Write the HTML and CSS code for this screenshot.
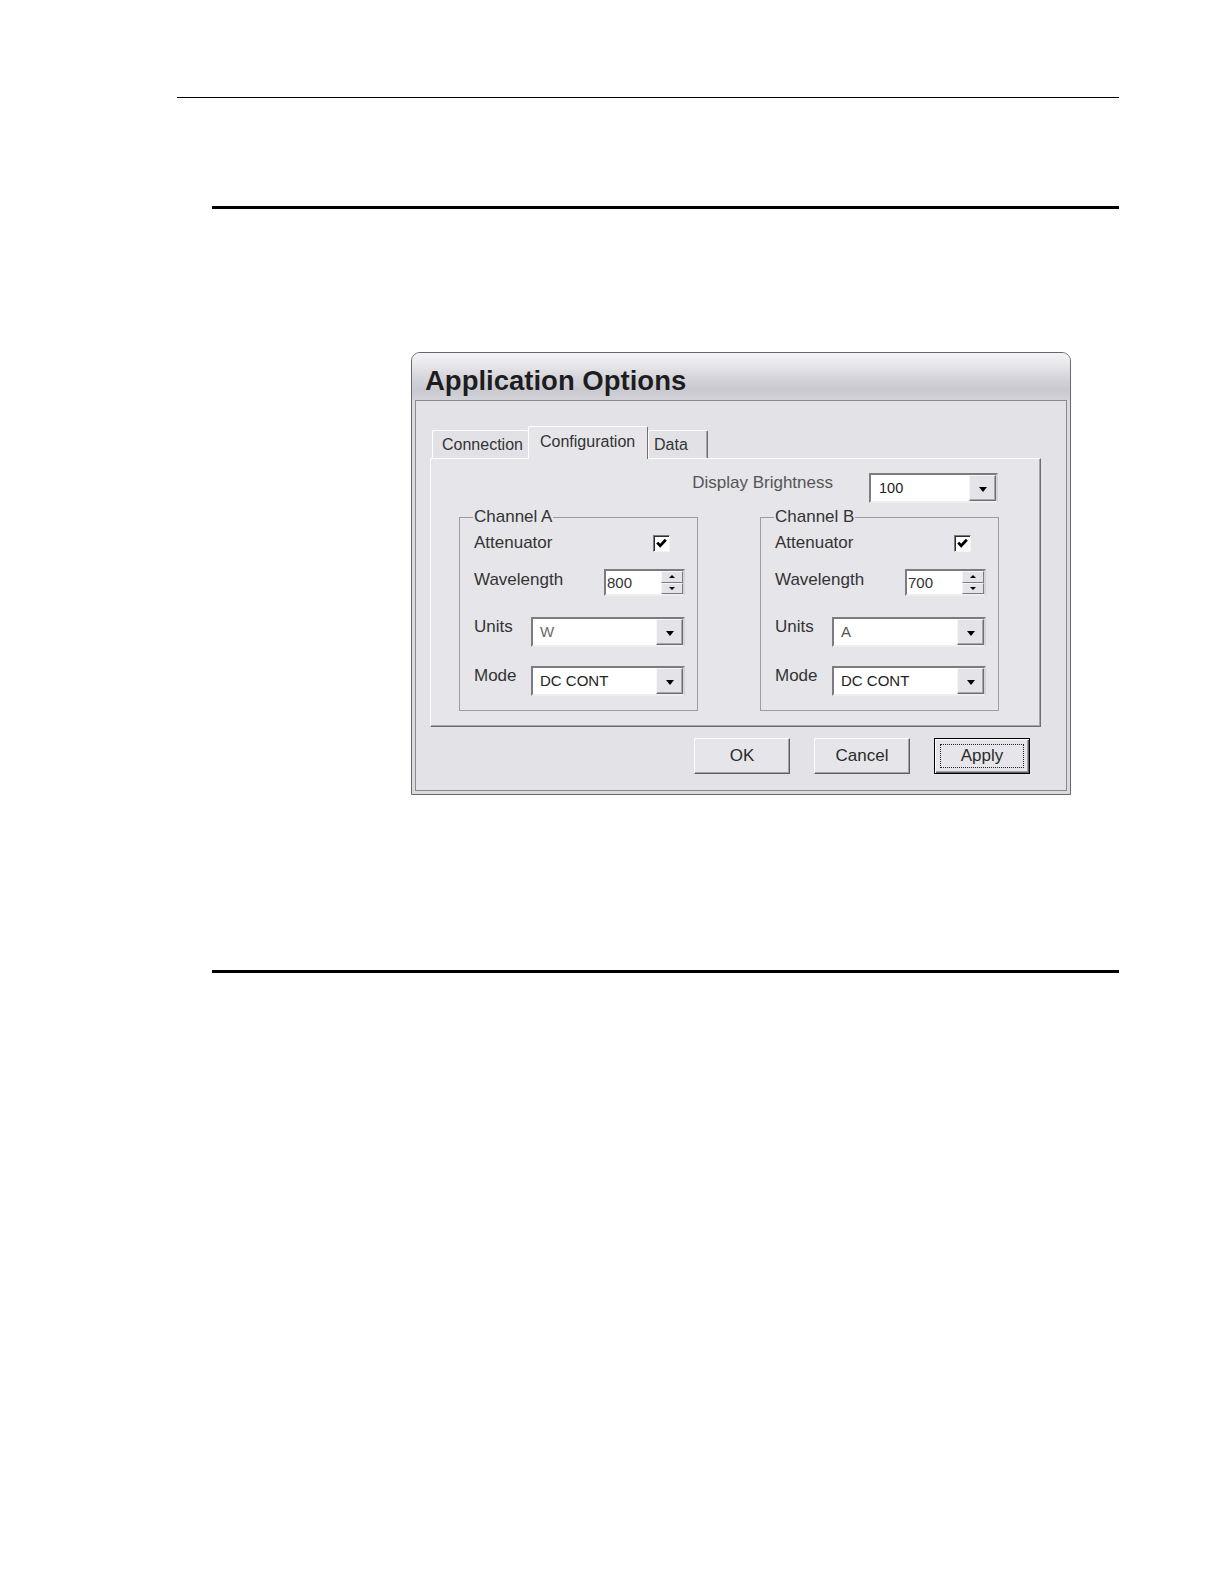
FILE: index.html
```html
<!DOCTYPE html>
<html lang="en">
<head>
<meta charset="utf-8">
<title>Application Options</title>
<link rel="stylesheet" href="styles.css">
</head>
<body>
<div class="page">
  <div class="rule-thin"></div>
  <div class="rule-thick rule-top"></div>

  <div class="dialog">
    <div class="titlebar"><span class="title">Application Options</span></div>
    <div class="client">
      <div class="tabs">
        <div class="tab tab-connection">Connection</div>
        <div class="tab tab-active">Configuration</div>
        <div class="tab tab-data">Data</div>
      </div>
      <div class="panel">
        <div class="brightness-row">
          <span class="label label-dim">Display Brightness</span>
          <div class="combo combo-brightness">
            <span class="combo-text">100</span>
            <span class="drop-btn"><span class="arrow-down"></span></span>
          </div>
        </div>
        <div class="groups">
          <fieldset class="group">
            <legend>Channel A</legend>
            <div class="row row-check">
              <span class="label">Attenuator</span>
              <span class="checkbox"><svg viewBox="0 0 15 15" width="15" height="15"><path d="M3.2 6.6 L6.2 9.8 L11.8 3.8" fill="none" stroke="#000" stroke-width="2.8"/></svg></span>
            </div>
            <div class="row row-spin">
              <span class="label">Wavelength</span>
              <div class="spin">
                <span class="spin-text">800</span>
                <span class="spin-btns">
                  <span class="spin-btn"><span class="arrow-up-sm"></span></span>
                  <span class="spin-btn"><span class="arrow-down-sm"></span></span>
                </span>
              </div>
            </div>
            <div class="row row-units">
              <span class="label">Units</span>
              <div class="combo combo-field">
                <span class="combo-text text-dim">W</span>
                <span class="drop-btn"><span class="arrow-down"></span></span>
              </div>
            </div>
            <div class="row row-mode">
              <span class="label">Mode</span>
              <div class="combo combo-field">
                <span class="combo-text">DC CONT</span>
                <span class="drop-btn"><span class="arrow-down"></span></span>
              </div>
            </div>
          </fieldset>

          <fieldset class="group">
            <legend>Channel B</legend>
            <div class="row row-check">
              <span class="label">Attenuator</span>
              <span class="checkbox"><svg viewBox="0 0 15 15" width="15" height="15"><path d="M3.2 6.6 L6.2 9.8 L11.8 3.8" fill="none" stroke="#000" stroke-width="2.8"/></svg></span>
            </div>
            <div class="row row-spin">
              <span class="label">Wavelength</span>
              <div class="spin">
                <span class="spin-text">700</span>
                <span class="spin-btns">
                  <span class="spin-btn"><span class="arrow-up-sm"></span></span>
                  <span class="spin-btn"><span class="arrow-down-sm"></span></span>
                </span>
              </div>
            </div>
            <div class="row row-units">
              <span class="label">Units</span>
              <div class="combo combo-field">
                <span class="combo-text text-dim2">A</span>
                <span class="drop-btn"><span class="arrow-down"></span></span>
              </div>
            </div>
            <div class="row row-mode">
              <span class="label">Mode</span>
              <div class="combo combo-field">
                <span class="combo-text">DC CONT</span>
                <span class="drop-btn"><span class="arrow-down"></span></span>
              </div>
            </div>
          </fieldset>
        </div>
      </div>
      <div class="buttons">
        <button class="btn" type="button"><span class="btn-label">OK</span></button>
        <button class="btn" type="button"><span class="btn-label">Cancel</span></button>
        <button class="btn btn-default" type="button"><span class="btn-label">Apply</span></button>
      </div>
    </div>
  </div>

  <div class="rule-thick rule-bottom"></div>
</div>
</body>
</html>
```

FILE: styles.css
```css
html, body {
  margin: 0;
  padding: 0;
  background: #ffffff;
}

body {
  font-family: "Liberation Sans", Arial, sans-serif;
  color: #333;
}

.page {
  padding-top: 97px;
}

.rule-thin {
  margin-left: 177px;
  width: 942px;
  height: 1px;
  background: #000;
}

.rule-thick {
  margin-left: 212px;
  width: 907px;
  height: 3px;
  background: #000;
}

.rule-top {
  margin-top: 108px;
}

.rule-bottom {
  margin-top: 175px;
}

/* ---------- dialog ---------- */

.dialog {
  margin-top: 143px;
  margin-left: 411px;
  width: 660px;
  box-sizing: border-box;
  border: 1px solid #67676c;
  border-radius: 9px 9px 0 0;
  background: #dadadf;
  padding: 0 3px 3px;
}

.titlebar {
  height: 47px;
  box-sizing: border-box;
  margin: 0 -3px;
  padding: 14px 0 0 13px;
  border-radius: 8px 8px 0 0;
  background: linear-gradient(to bottom,
    #f4f4f7 0%,
    #e9e9ed 22%,
    #d6d6dc 50%,
    #c9c9d0 78%,
    #d2d2d8 100%);
}

.title {
  display: block;
  font-family: "Liberation Sans", Arial, sans-serif;
  font-size: 27.5px;
  font-weight: 700;
  line-height: 1;
  color: #1d1d21;
  text-shadow: 0 0 1px rgba(255, 255, 255, 0.6);
}

.client {
  height: 391px;
  box-sizing: border-box;
  border: 1px solid #8a8a8e;
  background: #e3e3e7;
  padding-top: 25px;
}

/* ---------- tabs ---------- */

.tabs {
  display: flex;
  align-items: flex-end;
  margin-left: 16px;
  height: 32px;
}

.tab {
  height: 28px;
  box-sizing: border-box;
  display: flex;
  align-items: center;
  border-top: 1px solid #ffffff;
  border-left: 1px solid #ffffff;
  border-right: 1px solid #6f6f73;
  border-radius: 2px 2px 0 0;
  background: #e2e2e6;
  font-size: 16px;
  color: #333;
  white-space: nowrap;
}

.tab-connection {
  width: 96px;
  padding-left: 9px;
  border-right: none;
}

.tab-active {
  width: 120px;
  height: 33px;
  margin-bottom: -1px;
  padding-left: 11px;
  padding-bottom: 2px;
  background: #e6e6ea;
  position: relative;
  z-index: 1;
}

.tab-data {
  width: 60px;
  padding-left: 5px;
  box-shadow: inset -1px 0 0 #a6a6aa;
}

/* ---------- panel ---------- */

.panel {
  margin-left: 14px;
  width: 611px;
  height: 269px;
  box-sizing: border-box;
  border: 1px solid;
  border-color: #ffffff #6f6f73 #6f6f73 #ffffff;
  box-shadow: inset -1px -1px 0 #a6a6aa;
  background: #e6e6ea;
}

.brightness-row {
  display: flex;
  justify-content: flex-end;
  align-items: flex-start;
  gap: 36px;
  padding: 14px 42px 0 0;
  height: 30px;
}

.label {
  font-size: 17px;
  line-height: 20px;
  color: #333;
  white-space: nowrap;
}

.label-dim {
  color: #555;
}

.groups {
  display: flex;
  gap: 62px;
  margin-top: 4px;
  padding-left: 28px;
}

.group {
  width: 239px;
  min-width: 0;
  box-sizing: border-box;
  margin: 0;
  padding: 0 12px 14px 0;
  border: 1px solid #9d9da1;
}

.group legend {
  margin-left: 13px;
  padding: 0 1px;
  font-size: 17px;
  line-height: 20px;
  color: #333;
}

.row {
  display: flex;
  justify-content: space-between;
  padding-left: 14px;
}

.row-check {
  margin-top: 6px;
  height: 20px;
  align-items: center;
}

.row-spin {
  margin-top: 16px;
  align-items: flex-start;
}

.row-spin .label {
  margin-top: 1px;
}

.row-units {
  margin-top: 21px;
  align-items: flex-start;
}

.row-mode {
  margin-top: 19px;
  align-items: flex-start;
}

/* ---------- checkbox ---------- */

.checkbox {
  width: 17px;
  height: 17px;
  box-sizing: border-box;
  margin-right: 15px;
  display: flex;
  background: #ffffff;
  border: 1px solid;
  border-color: #7a7a7e #f4f4f6 #f4f4f6 #7a7a7e;
  box-shadow: inset 1px 1px 0 #2e2e32;
}

.checkbox svg {
  display: block;
}

/* ---------- spin box ---------- */

.spin {
  width: 81px;
  height: 27px;
  box-sizing: border-box;
  display: flex;
  border: 2px solid;
  border-color: #7c7c80 #d4d4d8 #eeeef0 #7c7c80;
  background: #ffffff;
}

.spin-text {
  flex: 1;
  padding-left: 1px;
  font-size: 15px;
  line-height: 23px;
  color: #333;
}

.spin-btns {
  width: 22px;
  display: flex;
  flex-direction: column;
}

.spin-btn {
  flex: 1;
  box-sizing: border-box;
  display: flex;
  align-items: center;
  justify-content: center;
  background: #e4e4e8;
  border: 1px solid;
  border-color: #f6f6f8 #7c7c80 #7c7c80 #f6f6f8;
}

.arrow-up-sm {
  width: 0;
  height: 0;
  border-left: 3px solid transparent;
  border-right: 3px solid transparent;
  border-bottom: 3px solid #000;
}

.arrow-down-sm {
  width: 0;
  height: 0;
  border-left: 3px solid transparent;
  border-right: 3px solid transparent;
  border-top: 3px solid #000;
}

/* ---------- combo box ---------- */

.combo {
  height: 30px;
  box-sizing: border-box;
  display: flex;
  border: 2px solid;
  border-color: #7c7c80 #d4d4d8 #eeeef0 #7c7c80;
  background: #ffffff;
}

.combo-field {
  width: 154px;
}

.combo-brightness {
  width: 129px;
}

.combo-text {
  flex: 1;
  padding-left: 7px;
  font-size: 15px;
  line-height: 26px;
  color: #222;
  white-space: nowrap;
}

.combo-brightness .combo-text {
  padding-left: 8px;
  font-size: 14.5px;
}

.text-dim {
  color: #6a6a6a;
}

.text-dim2 {
  color: #555;
}

.drop-btn {
  width: 27px;
  box-sizing: border-box;
  display: flex;
  align-items: center;
  justify-content: center;
  background: #e4e4e8;
  border: 1px solid;
  border-color: #f6f6f8 #6f6f73 #6f6f73 #f6f6f8;
  box-shadow: inset -1px -1px 0 #a6a6aa;
}

.arrow-down {
  width: 0;
  height: 0;
  margin-top: 2px;
  border-left: 4px solid transparent;
  border-right: 4px solid transparent;
  border-top: 5px solid #000;
}

/* ---------- buttons ---------- */

.buttons {
  display: flex;
  justify-content: flex-end;
  gap: 24px;
  padding-right: 36px;
  margin-top: 11px;
}

.btn {
  -webkit-appearance: none;
  appearance: none;
  margin: 0;
  width: 96px;
  height: 36px;
  box-sizing: border-box;
  padding: 5px;
  display: flex;
  border: 1px solid;
  border-color: #ffffff #5e5e62 #5e5e62 #ffffff;
  box-shadow: inset -1px -1px 0 #a2a2a6;
  background: #e6e6ea;
  font-family: "Liberation Sans", Arial, sans-serif;
  font-size: 17px;
  color: #2a2a2a;
}

.btn-label {
  flex: 1;
  display: flex;
  align-items: center;
  justify-content: center;
  border: 1px dotted transparent;
}

.btn-default {
  border-color: #000;
  box-shadow: inset 1px 1px 0 #ffffff, inset -1px -1px 0 #5e5e62, inset -2px -2px 0 #a2a2a6;
}

.btn-default .btn-label {
  border-color: #222;
}
```
